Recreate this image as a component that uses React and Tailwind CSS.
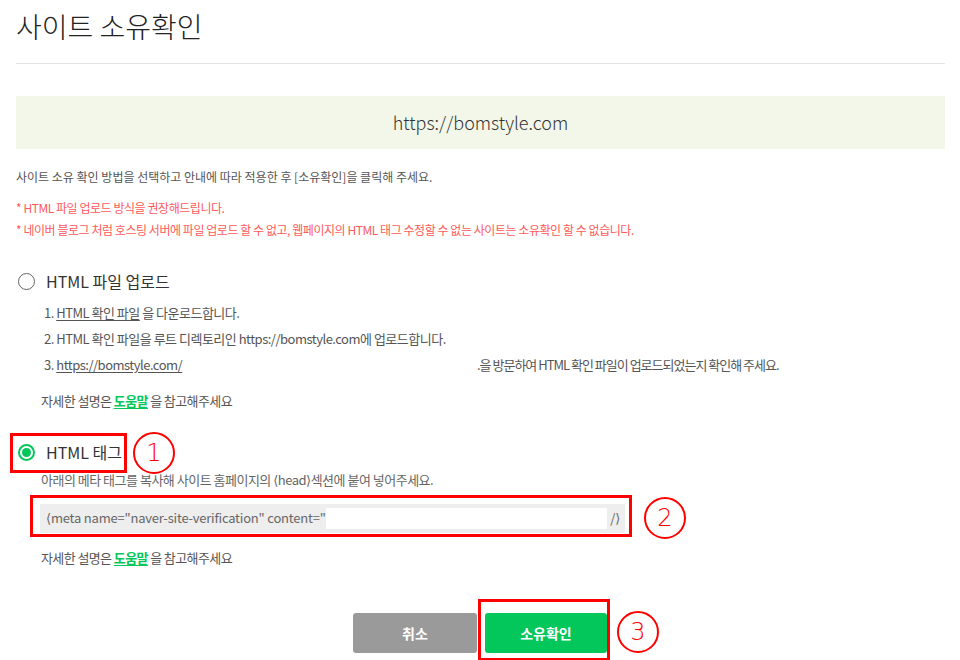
// 사이트 소유확인 화면 (네이버 서치어드바이저 스타일)
import React from 'react'

const font = { fontFamily: '"Noto Sans CJK KR", "Noto Sans", sans-serif' }

// 가는 꺾쇠 괄호 (〈 〉 대신)
function Angle({ children }) {
  return <span style={{ fontFamily: '"DejaVu Sans", sans-serif' }}>{children}</span>
}

// 빨간 번호 원 (주석 표시)
function Badge({ n, className }) {
  return (
    <div
      className={`absolute w-[42px] h-[42px] rounded-full border-2 border-[#ff0000] flex items-center justify-center text-[#ff0000] text-[24px] leading-none ${className}`}
      style={{ fontFamily: '"DejaVu Sans", sans-serif', fontWeight: 200 }}
    >
      {n}
    </div>
  )
}

function Radio({ checked }) {
  if (checked) {
    return (
      <span className="w-[17px] h-[17px] rounded-full border-2 border-[#03c75a] flex items-center justify-center">
        <span className="w-[9px] h-[9px] rounded-full bg-[#03c75a]" />
      </span>
    )
  }
  return <span className="w-[17px] h-[17px] rounded-full border-[1.5px] border-[#666]" />
}

function HelpLine({ className }) {
  return (
    <p className={`ml-[25px] text-[13px] leading-[20px] text-[#555] tracking-[-0.6px] ${className}`}>
      자세한 설명은{' '}
      <a className="text-[#03c75a] font-bold underline underline-offset-2">도움말</a> 을 참고해주세요
    </p>
  )
}

export default function App() {
  return (
    <div className="w-[960px] h-[660px] overflow-hidden bg-white pl-4 pr-[15px]" style={font}>
      <h1 className="pt-[6px] text-[28px] leading-[40px] text-[#222] font-light">사이트 소유확인</h1>
      <div className="mt-[17px] border-t border-[#e3e3e3]" />

      {/* 사이트 주소 */}
      <div className="mt-[32px] h-[53px] bg-[#f2f7ea] flex items-center justify-center text-[18px] font-light text-[#333]">
        https://bomstyle.com
      </div>

      <p className="mt-[18px] text-[12px] leading-[20px] text-[#555]">
        사이트 소유 확인 방법을 선택하고 안내에 따라 적용한 후 [소유확인]을 클릭해 주세요.
      </p>
      <div className="mt-[10px] text-[12px] leading-[22px] text-[#ff5a5a] tracking-[-0.45px]">
        <p>* HTML 파일 업로드 방식을 권장해드립니다.</p>
        <p>* 네이버 블로그 처럼 호스팅 서버에 파일 업로드 할 수 없고, 웹페이지의 HTML 태그 수정할 수 없는 사이트는 소유확인 할 수 없습니다.</p>
      </div>

      {/* HTML 파일 업로드 */}
      <label className="mt-[28px] h-[24px] flex items-center gap-[11px] pl-[2px] text-[16px] text-[#333]">
        <Radio />
        HTML 파일 업로드
      </label>
      <ol className="mt-[7px] ml-[28px] text-[13px] leading-[26px] text-[#555] tracking-[-0.5px]">
        <li>
          1. <span className="underline underline-offset-2">HTML 확인 파일</span> 을 다운로드합니다.
        </li>
        <li>2. HTML 확인 파일을 루트 디렉토리인 https://bomstyle.com에 업로드합니다.</li>
        <li className="flex whitespace-nowrap">
          <span className="w-[433px] flex">
            3.&nbsp;
            <span className="underline underline-offset-2">https://bomstyle.com/</span>
          </span>
          <span className="tracking-[-1px]">.을 방문하여 HTML 확인 파일이 업로드되었는지 확인해 주세요.</span>
        </li>
      </ol>
      <HelpLine className="mt-[13px]" />

      {/* HTML 태그 */}
      <div className="relative mt-[29px]">
        <label className="h-[24px] flex items-center gap-[11px] pl-[2px] text-[16px] text-[#333]">
          <Radio checked />
          HTML 태그
        </label>
        <div className="absolute left-[-6px] top-[-7px] w-[117px] h-[40px] border-[3px] border-[#ff0000]" />
        <Badge n="1" className="left-[117px] top-[-8px]" />
      </div>
      <p className="mt-[6px] ml-[25px] text-[13px] leading-[20px] text-[#666] tracking-[-0.5px]">
        아래의 메타 태그를 복사해 사이트 홈페이지의 <Angle>⟨</Angle>head<Angle>⟩</Angle>섹션에 붙여 넣어주세요.
      </p>
      <div className="relative mt-[13px] ml-[24px] w-[585px]">
        <div className="h-[29px] bg-[#eeeeee] flex items-center pl-[6px] pr-[5px] text-[13px] text-[#666] whitespace-nowrap tracking-[-0.2px]">
          <span className="w-[280px]">
            <Angle>⟨</Angle>meta name="naver-site-verification" content="
          </span>
          <span className="flex-1 h-[21px] bg-white" />
          <span className="ml-[3px]">/<Angle>⟩</Angle></span>
        </div>
        <div className="absolute left-[-10px] top-[-9px] w-[602px] h-[42px] border-[3px] border-[#ff0000]" />
        <Badge n="2" className="left-[604px] top-[-7px]" />
      </div>
      <HelpLine className="mt-[15px]" />

      {/* 버튼 */}
      <div className="mt-[45px] flex justify-center gap-[8px] pr-px">
        <button className="w-[124px] h-[40px] rounded-[3px] bg-[#9a9a9a] text-white text-[14px] font-bold">취소</button>
        <div className="relative">
          <button className="w-[122px] h-[40px] rounded-[3px] bg-[#03c75a] text-white text-[14px] font-bold">소유확인</button>
          <div className="absolute left-[-7px] top-[-14px] w-[132px] h-[62px] border-[3px] border-[#ff0000]" />
          <Badge n="3" className="left-[132px] top-[-2px]" />
        </div>
      </div>
    </div>
  )
}
